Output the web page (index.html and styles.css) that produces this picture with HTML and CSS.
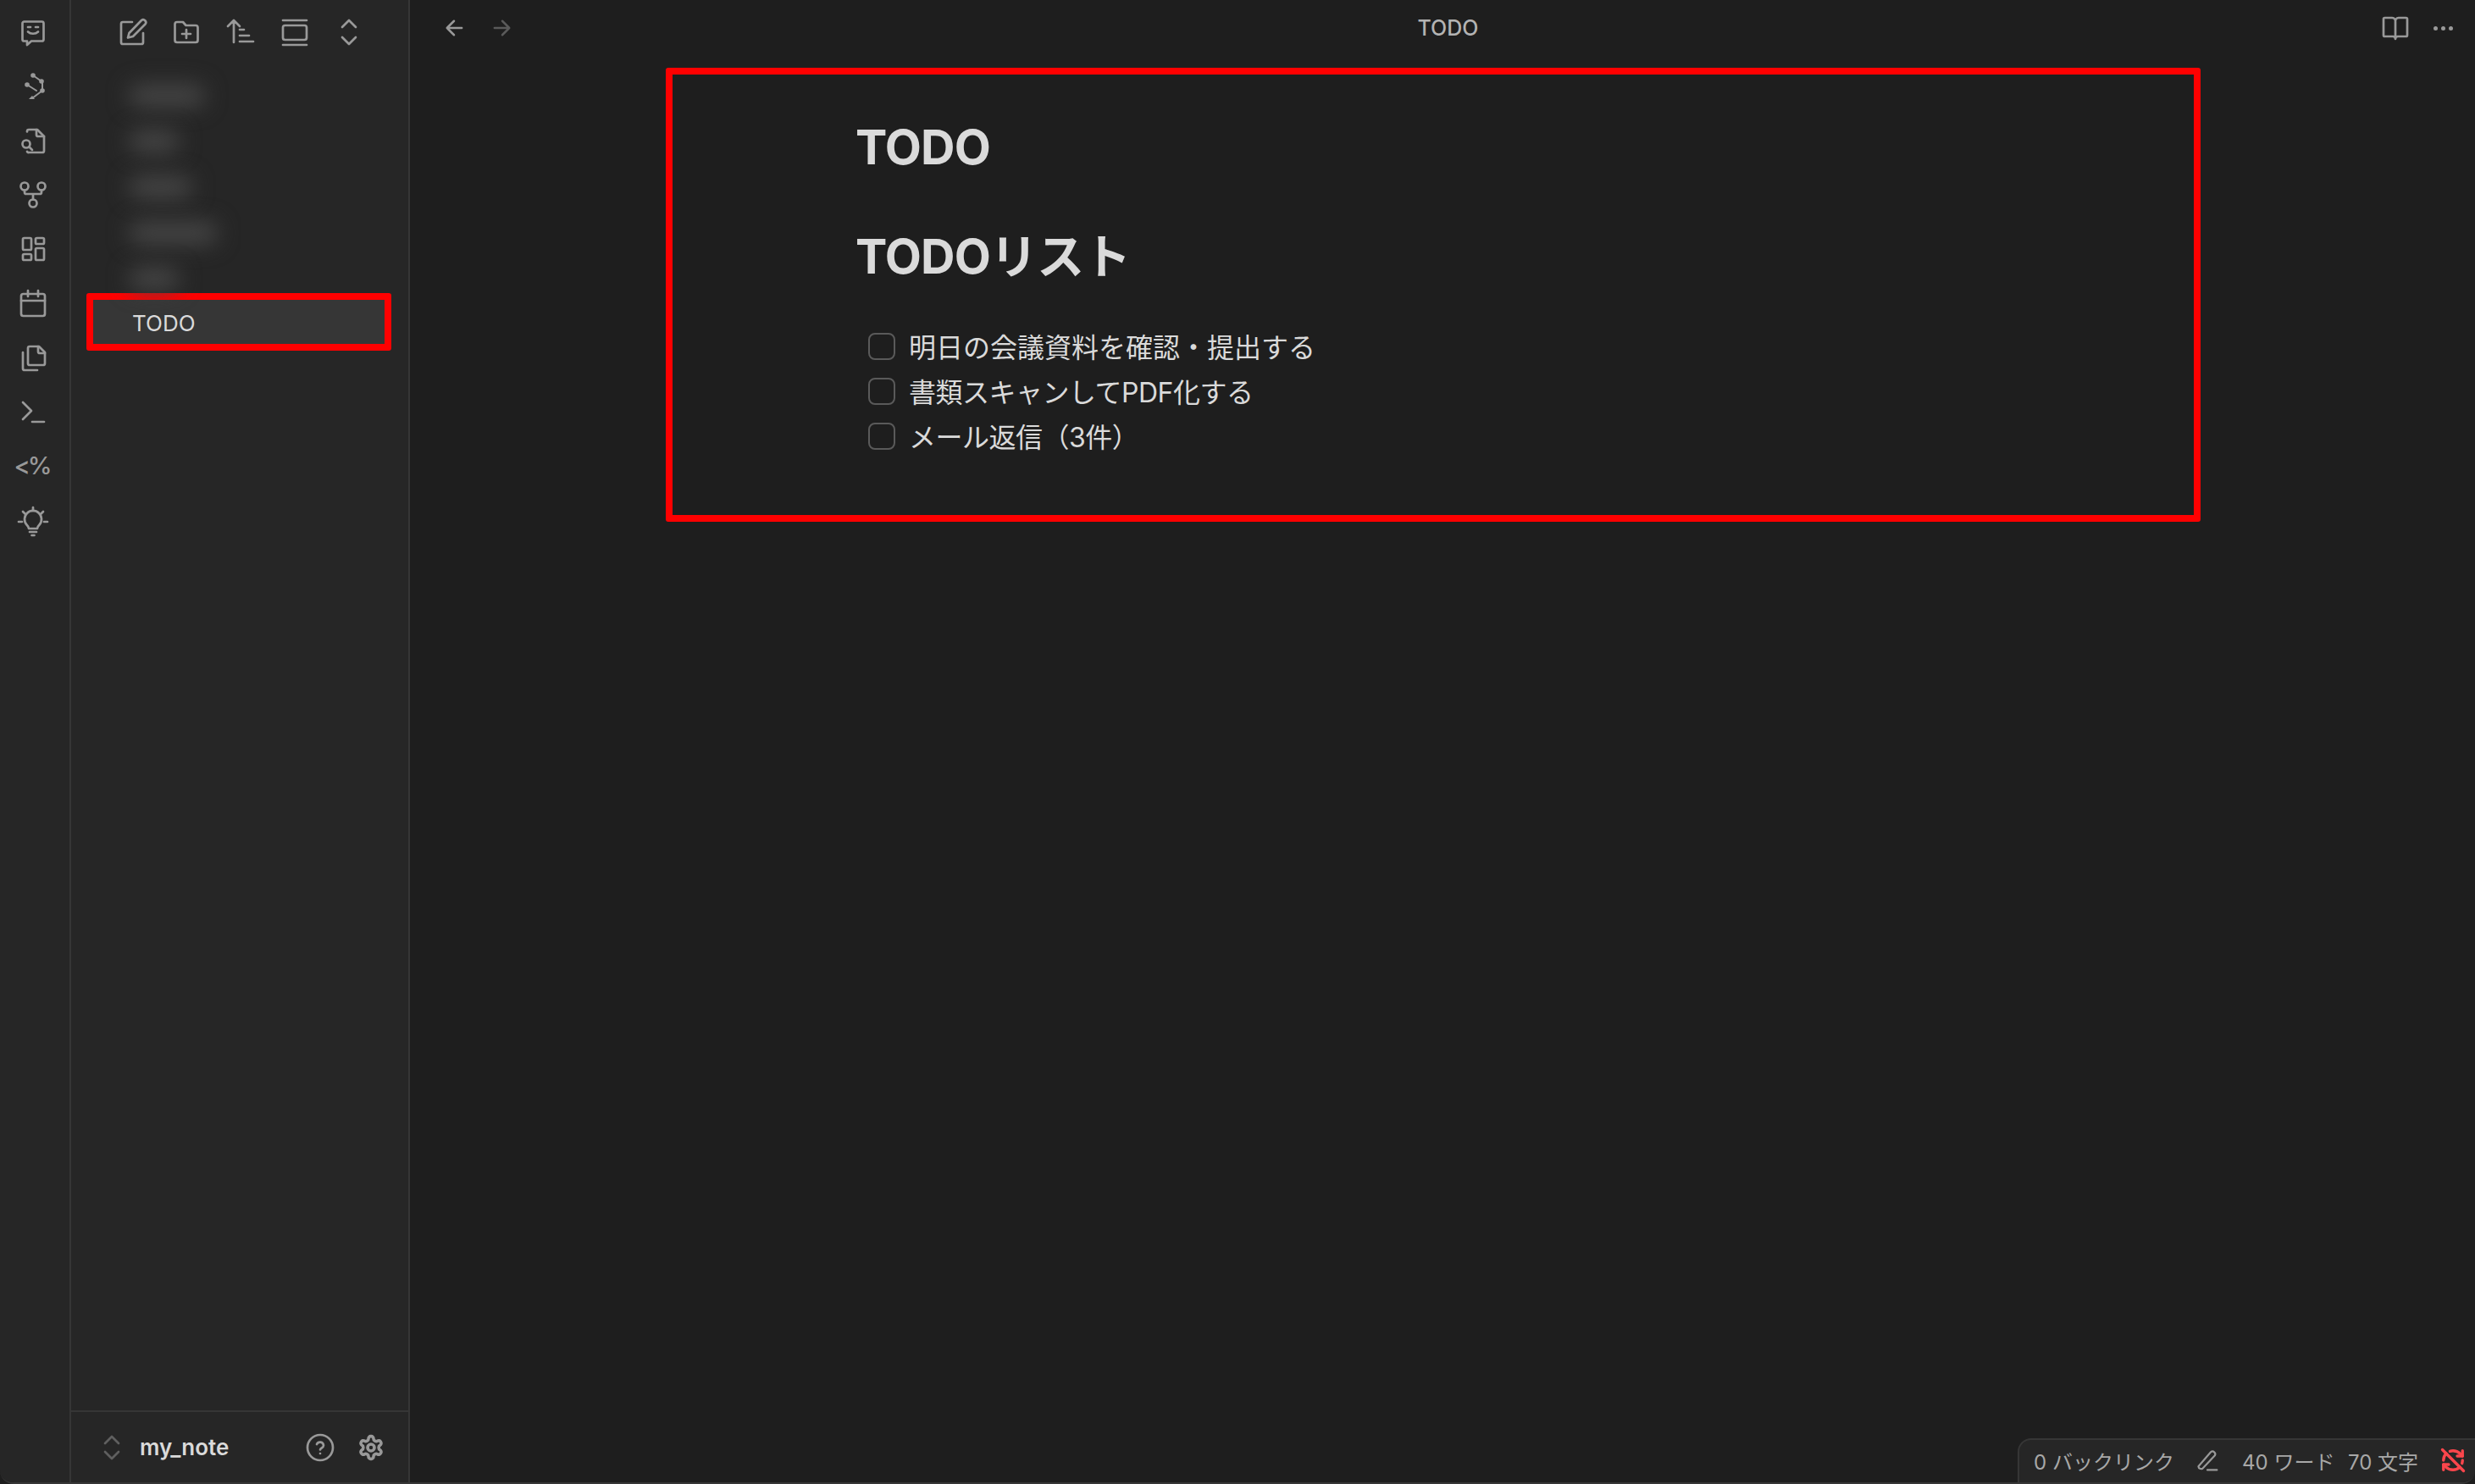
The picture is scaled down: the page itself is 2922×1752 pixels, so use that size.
FILE: index.html
```html
<!DOCTYPE html>
<html lang="ja">
  <head>
    <meta charset="UTF-8" />
    <title>TODO</title>
    <link rel="stylesheet" href="styles.css">
  </head>
  <body>
    <div class="app">
      <!-- Ribbon -->
      <nav class="ribbon">
        <svg class="icon" viewBox="0 0 32 32"><path d="M3.500 6.500a2 2 0 0 1 2-2h21a2 2 0 0 1 2 2v19a2 2 0 0 1-2 2H14l-5 4.500v-4.500H5.500a2 2 0 0 1-2-2z"/><path d="M10 11h3M19 11h3M10 16.500c3 3 9 3 12 0"/></svg>
        <svg class="icon" viewBox="0 0 32 32"><path class="thin" d="M16 4l10 7M27 13l0 7M9 15l11 7M27 22L15 31"/><circle class="dot" cx="16" cy="4" r="2.800"/><circle class="dot" cx="26" cy="11" r="2.800"/><circle class="dot" cx="9" cy="15" r="2.800"/><circle class="dot" cx="27" cy="22" r="2.800"/><path class="dot" d="M11 32l4-4 3 4z"/></svg>
        <svg class="icon" viewBox="0 0 32 32"><path d="M9 5.500V5a2 2 0 0 1 2-2h10l8 8v17a2 2 0 0 1-2 2H11a2 2 0 0 1-2-1"/><path d="M20 3v6a2 2 0 0 0 2 2h7"/><circle cx="8" cy="20" r="4.500"/><path d="M11.500 23.500l3.500 3.500"/></svg>
        <svg class="icon" viewBox="0 0 32 32"><circle cx="6" cy="6" r="4.500"/><circle cx="26" cy="6" r="4.500"/><circle cx="16" cy="26" r="4.500"/><path d="M6 10.500v2.500a2 2 0 0 0 2 2h16a2 2 0 0 0 2-2v-2.500M16 15v6.500"/></svg>
        <svg class="icon" viewBox="0 0 32 32"><rect x="4" y="3" width="10" height="14" rx="1.500"/><rect x="19" y="3" width="10" height="7" rx="1.500"/><rect x="19" y="15" width="10" height="14" rx="1.500"/><rect x="4" y="22" width="10" height="7" rx="1.500"/></svg>
        <svg class="icon" viewBox="0 0 32 32"><rect x="4" y="5" width="28" height="26" rx="2.500" transform="translate(-2)"/><path d="M2 13h28M10 1v7M22 1v7"/></svg>
        <svg class="icon" viewBox="0 0 32 32"><path d="M10 4a2 2 0 0 1 2-2h11l7 7v13a2 2 0 0 1-2 2H12a2 2 0 0 1-2-2z"/><path d="M22 2v6a2 2 0 0 0 2 2h6"/><path d="M4 9v19a2 2 0 0 0 2 2h15"/></svg>
        <svg class="icon" viewBox="0 0 32 32"><path d="M4 4l10 10-10 10M15 27h14"/></svg>
        <span class="ribbon-text">&lt;%</span>
        <svg class="icon" viewBox="0 0 32 32"><path d="M16 -1v4M4 4l3 3M28 4l-3 3M-1 16h4M29 16h4"/><path d="M11 24c0-2-1-3-2.500-4.500a10 10 0 1 1 15 0C22 21 21 22 21 24z"/><path d="M12 28h8M14.500 32h3"/></svg>
      </nav>

      <!-- File list -->
      <aside class="sidebar">
        <div class="side-tools">
          <svg class="icon" viewBox="0 0 32 32"><path d="M16 4H5a2 2 0 0 0-2 2v22a2 2 0 0 0 2 2h22a2 2 0 0 0 2-2V17"/><path d="M27 2a3.200 3.200 0 0 1 4.500 4.500L17 21l-6 1.500L12.500 17z"/></svg>
          <svg class="icon" viewBox="0 0 32 32"><path d="M5 28a2.500 2.500 0 0 1-2.500-2.500v-19A2.500 2.500 0 0 1 5 4h7l3.500 4H27a2.500 2.500 0 0 1 2.500 2.500v15A2.500 2.500 0 0 1 27 28z"/><path d="M16 13v10M11 18h10"/></svg>
          <svg class="icon" viewBox="0 0 32 32"><path d="M1 9l7-7 7 7M8 2v26M15 13h5M15 20h11M15 27h16"/></svg>
          <svg class="icon" viewBox="0 0 32 32"><path d="M2 2h28M2 31h28"/><rect x="2" y="8" width="28" height="17" rx="2.500"/></svg>
          <svg class="icon" viewBox="0 0 32 32"><path d="M8 10l8-8 8 8M8 22l8 8 8-8"/></svg>
        </div>

        <div class="file-list">
          <div class="file-row"><span class="blur-text w-90"></span></div>
          <div class="file-row"><span class="blur-text w-60"></span></div>
          <div class="file-row"><span class="blur-text w-75"></span></div>
          <div class="file-row"><span class="blur-text w-105"></span></div>
          <div class="file-row"><span class="blur-text w-60"></span></div>
          <div class="file-active"><div class="file-active-inner">TODO</div></div>
        </div>

        <div class="vault-bar">
          <svg class="icon chevrons" viewBox="0 0 32 32"><path d="M8 11l8-8 8 8M8 21l8 8 8-8"/></svg>
          <span class="vault-name">my_note</span>
          <svg class="icon help" viewBox="0 0 32 32"><circle cx="16" cy="16" r="15"/><path d="M12 12a4.200 4.200 0 0 1 8 1.500c0 2.500-4 3.500-4 5M16 23h.02"/></svg>
          <svg class="icon" viewBox="0 0 24 24"><path d="M12.220 2h-.44a2 2 0 0 0-2 2v.18a2 2 0 0 1-1 1.730l-.43.250a2 2 0 0 1-2 0l-.150-.080a2 2 0 0 0-2.730.730l-.220.380a2 2 0 0 0 .730 2.730l.150.100a2 2 0 0 1 1 1.720v.510a2 2 0 0 1-1 1.740l-.150.090a2 2 0 0 0-.730 2.730l.220.380a2 2 0 0 0 2.730.730l.150-.080a2 2 0 0 1 2 0l.430.250a2 2 0 0 1 1 1.730V20a2 2 0 0 0 2 2h.44a2 2 0 0 0 2-2v-.18a2 2 0 0 1 1-1.730l.43-.250a2 2 0 0 1 2 0l.150.080a2 2 0 0 0 2.730-.730l.220-.390a2 2 0 0 0-.730-2.730l-.150-.080a2 2 0 0 1-1-1.740v-.500a2 2 0 0 1 1-1.740l.150-.090a2 2 0 0 0 .730-2.730l-.220-.380a2 2 0 0 0-2.730-.730l-.150.080a2 2 0 0 1-2 0l-.430-.250a2 2 0 0 1-1-1.730V4a2 2 0 0 0-2-2z"/><circle cx="12" cy="12" r="3"/></svg>
        </div>
      </aside>

      <!-- Note -->
      <main class="main">
        <header class="topbar">
          <div class="nav-arrows">
            <svg class="icon small" viewBox="0 0 24 24"><path d="M12 3L3 12l9 9M3 12h19"/></svg>
            <svg class="icon small faint" viewBox="0 0 24 24"><path d="M12 3l9 9-9 9M21 12H2"/></svg>
          </div>
          <div class="note-title">TODO</div>
          <div class="top-actions">
            <svg class="icon" viewBox="0 0 32 32"><path d="M16 9a4 4 0 0 0-4-5H3.500A1.500 1.500 0 0 0 2 5.500v19A1.500 1.500 0 0 0 3.500 26H13c2 0 3 1 3 3 0-2 1-3 3-3h9.500a1.500 1.500 0 0 0 1.500-1.500v-19A1.500 1.500 0 0 0 28.500 4H20a4 4 0 0 0-4 5zM16 9v20"/></svg>
            <div class="dots"><i></i><i></i><i></i></div>
          </div>
        </header>

        <section class="note-frame">
          <h1>TODO</h1>
          <h2>TODOリスト</h2>
          <ul class="tasks">
            <li><span class="check"></span>明日の会議資料を確認・提出する</li>
            <li class="tight"><span class="check"></span>書類スキャンしてPDF化する</li>
            <li class="tight"><span class="check"></span>メール返信（3件）</li>
          </ul>
        </section>

        <footer class="status">
          <span class="status-links">0 バックリンク</span>
          <svg class="icon status-pen" viewBox="0 0 32 32"><path d="M3 25L21 4a4 4 0 0 1 6 5L9 28a4 4 0 0 1-6-3zM16 30h14"/></svg>
          <span class="status-words">40 ワード</span>
          <span class="status-chars">70 文字</span>
          <svg class="icon sync-off" viewBox="0 0 24 24"><path d="M21 8L18.740 5.740A9.750 9.750 0 0 0 12 3C11 3 10.030 3.160 9.130 3.470"/><path d="M8 16H3v5"/><path d="M3 12C3 9.510 4 7.260 5.640 5.640"/><path d="M3 16l2.260 2.260A9.750 9.750 0 0 0 12 21c2.490 0 4.740-1 6.360-2.640"/><path d="M21 12c0 1-.16 1.970-.47 2.870"/><path d="M21 3v5h-5"/><path d="M22 22L2 2"/></svg>
        </footer>
      </main>
    </div>
  </body>
</html>
```

FILE: styles.css
```css
* {
  box-sizing: border-box;
}

html,
body {
  margin: 0;
  height: 100%;
  background: #1e1e1e;
}

body {
  font-family: Inter, "Noto Sans CJK JP", sans-serif;
  font-size: 26px;
  color: #dadada;
  overflow: hidden;
}

.app {
  display: flex;
  height: 1752px;
  border-bottom: 2px solid #363636;
  border-radius: 0 0 16px 16px;
  overflow: hidden;
  position: relative;
}

.icon {
  width: 32px;
  height: 32px;
  fill: none;
  stroke: #999;
  stroke-width: 2.7;
  stroke-linecap: round;
  stroke-linejoin: round;
  overflow: visible;
  flex: none;
}

.icon .dot {
  fill: #999;
  stroke: none;
}

.icon .thin {
  stroke-width: 2;
}

.icon.small {
  width: 22px;
  height: 22px;
}

.icon.faint {
  stroke: #5a5a5a;
}

/* ribbon */
.ribbon {
  width: 84px;
  flex: none;
  background: #262626;
  border-right: 2px solid #363636;
  display: flex;
  flex-direction: column;
  align-items: center;
  gap: 32.300px;
  padding-top: 21px;
  padding-right: 5px;
}

.ribbon-text {
  height: 32px;
  line-height: 30px;
  font-size: 29px;
  letter-spacing: -3px;
  margin-left: -2px;
  color: #999;
  font-weight: 500;
}

/* sidebar */
.sidebar {
  width: 400px;
  flex: none;
  background: #262626;
  border-right: 2px solid #363636;
  display: flex;
  flex-direction: column;
}

.side-tools {
  display: flex;
  gap: 32px;
  padding: 22px 0 0 56px;
  height: 86px;
}

.file-list {
  flex: 1;
  padding-left: 18px;
}

.file-row {
  height: 54px;
  display: flex;
  align-items: center;
  padding-left: 50px;
}

.blur-text {
  display: block;
  height: 26px;
  background: #464646;
  border-radius: 13px;
  filter: blur(13px);
}

.w-60 {
  width: 60px;
}

.w-75 {
  width: 75px;
}

.w-90 {
  width: 90px;
}

.w-105 {
  width: 105px;
}

.file-active {
  width: 360px;
  height: 68px;
  margin-top: -10px;
  border: 8px solid #ff0000;
  border-radius: 3px;
}

.file-active-inner {
  height: 100%;
  background: #363636;
  padding-left: 46px;
  line-height: 56px;
  color: #dadada;
}

.vault-bar {
  height: 85px;
  border-top: 2px solid #363636;
  display: flex;
  align-items: center;
  padding-left: 32px;
}

.vault-name {
  font-weight: 600;
  margin-left: 17px;
  color: #dadada;
  flex: 1;
}

.chevrons {
  stroke: #5f5f5f;
}

.help {
  margin-right: 28px;
}

.vault-bar .icon:last-child {
  margin-right: 28px;
}

/* main pane */
.main {
  flex: 1;
  position: relative;
  background: #1e1e1e;
  min-width: 0;
}

.topbar {
  height: 80px;
  display: flex;
  padding: 22px 26px 0 41px;
}

.nav-arrows {
  display: flex;
  gap: 35px;
  width: 82px;
  height: 22px;
}

.note-title {
  flex: 1;
  text-align: center;
  font-size: 25px;
  color: #b3b3b3;
  line-height: 22px;
  font-weight: 500;
}

.top-actions {
  display: flex;
  align-items: center;
  gap: 29px;
  height: 22px;
}

.dots {
  display: flex;
  gap: 4px;
}

.dots i {
  display: block;
  width: 5px;
  height: 5px;
  border-radius: 50%;
  background: #999;
}

.note-frame {
  margin-left: 302px;
  width: 1812px;
  height: 536px;
  border: 8px solid #ff0000;
  border-radius: 3px;
  padding: 52px 0 0 216px;
}

h1,
h2 {
  margin: 0;
  font-size: 56px;
  font-weight: 700;
  line-height: 68px;
  letter-spacing: -0.015em;
  color: #dadada;
}

h2 {
  margin-top: 61px;
}

.tasks {
  list-style: none;
  margin: 44px 0 0;
  padding: 0 0 0 15px;
  font-size: 32px;
}

.tasks li {
  height: 53px;
  display: flex;
  align-items: center;
  gap: 16px;
}

.tasks li.tight {
  letter-spacing: -0.5px;
}

.check {
  width: 32px;
  height: 32px;
  margin-top: 3px;
  border: 2px solid #5a5a5a;
  border-radius: 8px;
  flex: none;
}

/* status bar */
.status {
  position: absolute;
  right: 0;
  bottom: 0;
  width: 540px;
  height: 52px;
  background: #262626;
  border: 2px solid #363636;
  border-width: 2px 0 0 2px;
  border-radius: 16px 0 0 0;
  font-size: 24px;
  color: #a8a8a8;
  display: flex;
  align-items: center;
  padding: 0 0 2px 17px;
}

.status-links {
  width: 192px;
}

.status-pen {
  width: 26px;
  height: 26px;
}

.status-words {
  margin-left: 28px;
  width: 125px;
}

.status-chars {
  width: 109px;
}

.sync-off {
  width: 30px;
  height: 30px;
  stroke: #fb464c;
}
```
